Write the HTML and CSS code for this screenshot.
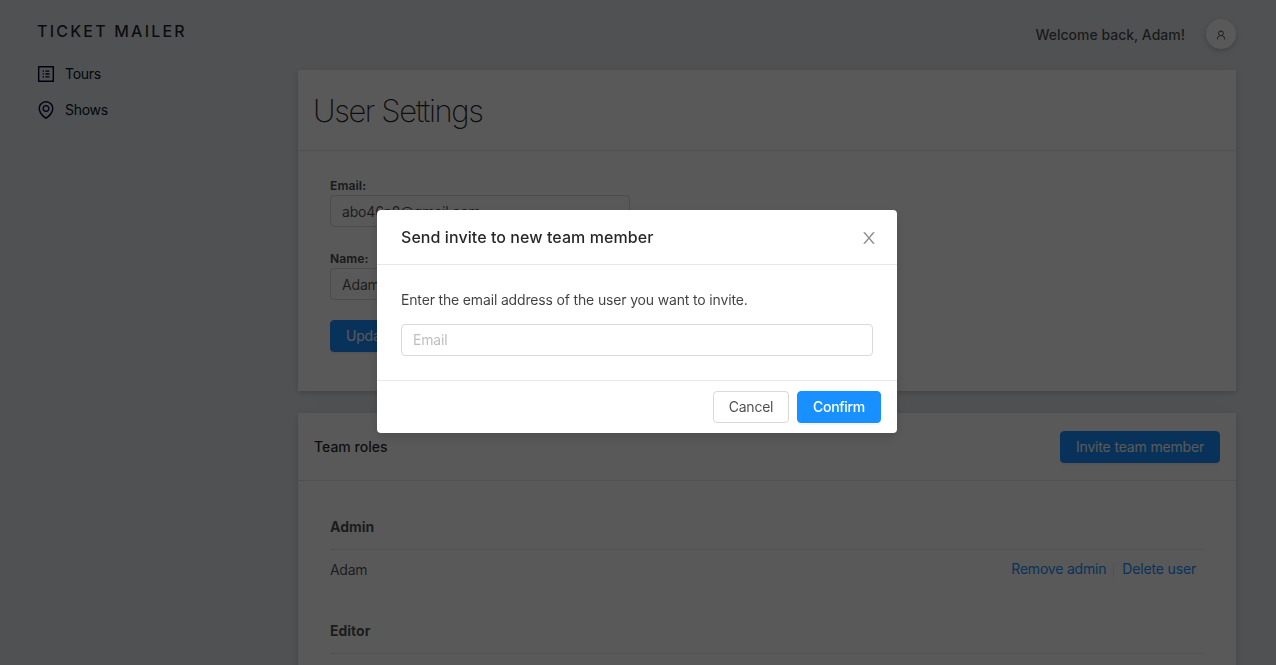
FILE: index.html
```html
<!DOCTYPE html>
<html lang="en">
<head>
<meta charset="utf-8">
<title>Ticket Mailer</title>
<link rel="stylesheet" href="styles.css">
</head>
<body>
<div class="app">
  <aside class="sidebar">
    <div class="brand">TICKET MAILER</div>
    <nav class="nav">
      <a class="nav-item"><svg class="nav-icon" viewBox="64 64 896 896"><path d="M880 112H144c-17.7 0-32 14.3-32 32v736c0 17.7 14.3 32 32 32h736c17.7 0 32-14.3 32-32V144c0-17.7-14.3-32-32-32zm-40 728H184V184h656v656zM492 400h184c4.4 0 8-3.6 8-8v-48c0-4.4-3.6-8-8-8H492c-4.4 0-8 3.6-8 8v48c0 4.4 3.6 8 8 8zm0 144h184c4.4 0 8-3.6 8-8v-48c0-4.4-3.6-8-8-8H492c-4.4 0-8 3.6-8 8v48c0 4.4 3.6 8 8 8zm0 144h184c4.4 0 8-3.6 8-8v-48c0-4.4-3.6-8-8-8H492c-4.4 0-8 3.6-8 8v48c0 4.4 3.6 8 8 8zM340 368a40 40 0 1 0 80 0 40 40 0 1 0-80 0zm0 144a40 40 0 1 0 80 0 40 40 0 1 0-80 0zm0 144a40 40 0 1 0 80 0 40 40 0 1 0-80 0z"/></svg><span>Tours</span></a>
      <a class="nav-item"><svg class="nav-icon" viewBox="64 64 896 896"><path d="M854.6 289.1a362.49 362.49 0 0 0-79.9-115.7 370.83 370.83 0 0 0-118.2-77.8C610.7 76.6 562.1 67 512 67c-50.1 0-98.7 9.6-144.5 28.5-44.3 18.3-84 44.5-118.2 77.8A363.6 363.6 0 0 0 169.4 289c-19.5 45-29.4 92.8-29.4 142 0 70.6 16.9 140.9 50.1 208.7 26.7 54.5 64 107.6 111 158.1 80.3 86.2 164.5 138.9 188.4 153a43.9 43.9 0 0 0 22.4 6.1c7.8 0 15.5-2 22.4-6.1 23.9-14.1 108.1-66.8 188.4-153 47-50.4 84.3-103.6 111-158.1C867.1 572 884 501.8 884 431.1c0-49.2-9.9-97-29.4-142zM512 880.2c-65.9-41.9-300-207.8-300-449.1 0-77.9 31.1-151.1 87.6-206.3C356.3 169.5 431.7 139 512 139s155.7 30.5 212.4 85.9C780.9 280 812 353.2 812 431.1c0 241.3-234.1 407.2-300 449.1zm0-617.2c-97.2 0-176 78.8-176 176s78.8 176 176 176 176-78.8 176-176-78.8-176-176-176zm79.2 255.2A111.6 111.6 0 0 1 512 551c-29.9 0-58-11.7-79.2-32.8A111.6 111.6 0 0 1 400 439c0-29.9 11.7-58 32.8-79.2A111.6 111.6 0 0 1 512 327c29.9 0 58 11.7 79.2 32.8A111.6 111.6 0 0 1 624 439c0 29.9-11.7 58-32.8 79.2z"/></svg><span>Shows</span></a>
    </nav>
  </aside>
  <main class="main">
    <header class="topbar">
      <span class="welcome">Welcome back, Adam!</span>
      <span class="avatar"><svg class="avatar-icon" viewBox="64 64 896 896"><path d="M858.5 763.6a374 374 0 0 0-80.6-119.5 375.63 375.63 0 0 0-119.5-80.6c-.4-.2-.8-.3-1.2-.5C719.5 518 760 444.7 760 362c0-137-111-248-248-248S264 225 264 362c0 82.7 40.5 156 102.8 201.1-.4.2-.8.3-1.2.5-44.8 18.9-85 46-119.5 80.6a375.63 375.63 0 0 0-80.6 119.5A371.7 371.7 0 0 0 136 901.8a8 8 0 0 0 8 8.2h60c4.4 0 7.9-3.5 8-7.8 2-77.2 33-149.5 87.8-204.3 56.7-56.7 132-87.9 212.2-87.9s155.5 31.2 212.2 87.9C779 752.7 810 825 812 902.2c.1 4.4 3.6 7.8 8 7.8h60a8 8 0 0 0 8-8.2c-1-47.8-10.9-94.3-29.5-138.2zM512 534c-45.9 0-89.1-17.9-121.6-50.4S340 407.9 340 362c0-45.9 17.9-89.1 50.4-121.6S466.1 190 512 190s89.1 17.9 121.6 50.4S684 316.1 684 362c0 45.9-17.9 89.1-50.4 121.6S557.9 534 512 534z"/></svg></span>
    </header>
    <section class="card">
      <div class="card-head card-head-large"><h1 class="page-title">User Settings</h1></div>
      <form class="settings">
        <label class="label">Email:</label>
        <div class="field">abo46n8@gmail.com</div>
        <label class="label">Name:</label>
        <div class="field">Adam</div>
        <span class="btn btn-primary btn-update">Update</span>
      </form>
    </section>
    <section class="card card-team">
      <div class="card-head"><h2 class="card-title">Team roles</h2><span class="btn btn-primary btn-invite">Invite team member</span></div>
      <div class="roles">
        <h3 class="role">Admin</h3>
        <div class="member">
          <span class="member-name">Adam</span>
          <span class="actions"><a class="link link-remove">Remove admin</a><i class="sep"></i><a class="link">Delete user</a></span>
        </div>
        <h3 class="role">Editor</h3>
      </div>
    </section>
  </main>
</div>
<div class="mask">
  <div class="modal">
    <div class="modal-head">
      <span class="modal-title">Send invite to new team member</span>
      <svg class="close" viewBox="64 64 896 896"><path d="M563.8 512l262.5-312.9c4.4-5.2.7-13.1-6.1-13.1h-79.8c-4.7 0-9.2 2.1-12.3 5.7L511.6 449.8 295.1 191.7c-3-3.6-7.5-5.7-12.3-5.7H203c-6.8 0-10.5 7.9-6.1 13.1L459.4 512 196.9 824.9A7.95 7.95 0 0 0 203 838h79.8c4.7 0 9.2-2.1 12.3-5.7l216.5-258.1 216.5 258.1c3 3.6 7.5 5.7 12.3 5.7h79.8c6.8 0 10.5-7.9 6.1-13.1L563.8 512z"/></svg>
    </div>
    <div class="modal-body">
      <p class="prompt">Enter the email address of the user you want to invite.</p>
      <div class="field field-wide placeholder">Email</div>
    </div>
    <div class="modal-foot">
      <span class="btn btn-cancel">Cancel</span>
      <span class="btn btn-primary btn-confirm">Confirm</span>
    </div>
  </div>
</div>
</body>
</html>
```
FILE: styles.css
```css
* { box-sizing: border-box; }
html, body { margin: 0; height: 100%; overflow: hidden; }
body { font: 14px/21px Inter, "Liberation Sans", sans-serif; color: rgba(0,0,0,.7); background: #e5e9ed; letter-spacing: -0.16px; }
h1, h2, h3, p { margin: 0; }
svg { display: block; fill: currentColor; flex: none; }

.app { display: flex; height: 665px; overflow: hidden; }
.sidebar { width: 298px; padding: 19px 0 0 37px; color: #001529; flex: none; }
.brand { font-size: 16px; line-height: 24px; font-weight: 500; letter-spacing: 2.2px; color: rgba(0,0,0,.85); }
.nav { display: flex; flex-direction: column; gap: 12px; margin-top: 19px; }
.nav-item { display: flex; align-items: center; gap: 10px; height: 24px; letter-spacing: -0.3px; }
.nav-item span { padding-bottom: 2px; }
.nav-icon { width: 18px; height: 18px; color: #000033; }

.main { width: 938px; }
.topbar { display: flex; justify-content: flex-end; align-items: center; height: 68px; margin-bottom: 2px; gap: 21px; }
.welcome { padding-top: 1px; font-weight: 500; letter-spacing: 0; }
.avatar { display: flex; align-items: center; justify-content: center; width: 30px; height: 30px; border-radius: 50%; background: #fff; box-shadow: 0 2px 6px rgba(0,0,0,.2); }
.avatar-icon { width: 10px; height: 10px; margin-top: 2px; }

.card { height: 321px; background: #fff; box-shadow: 0 2px 5px rgba(0,0,0,.15), 0 0 22px rgba(0,0,0,.04); }
.card-team { margin-top: 22px; height: 300px; }
.card-head { display: flex; align-items: center; justify-content: space-between; height: 68px; padding: 0 16px; border-bottom: 1px solid #e8e8e8; }
.card-head-large { height: 81px; padding-left: 15px; }
.page-title { padding-top: 2px; font-size: 31px; line-height: 48px; font-weight: 200; letter-spacing: -1.4px; color: rgba(0,0,0,.85); }
.card-title { font-size: 14px; font-weight: 500; letter-spacing: 0; color: rgba(0,0,0,.85); }

.settings { padding: 25px 32px 0; }
.label { display: block; font-size: 12px; line-height: 19px; font-weight: 700; letter-spacing: 0.1px; }
.field { width: 300px; height: 32px; padding: 5px 11px; line-height: 21px; border: 1px solid #d9d9d9; border-radius: 4px; background: #fff; }
.settings .field { margin-bottom: 22px; }
.btn { display: inline-flex; align-items: center; justify-content: center; height: 32px; padding-bottom: 2px; border: 1px solid #d9d9d9; border-radius: 4px; white-space: nowrap; }
.btn-primary { color: #fff; border-color: #1890ff; background: #1890ff; box-shadow: 0 2px 0 rgba(0,0,0,.045); }
.settings .btn-update { margin-top: -2px; width: 79px; }
.btn-invite { width: 160px; padding-bottom: 0; }

.roles { padding: 32px 32px 0; }
.role { height: 37px; padding-top: 3px; font-size: 14px; line-height: 21px; font-weight: 700; letter-spacing: 0; border-bottom: 1px solid #e8e8e8; }
.member { display: flex; justify-content: space-between; padding: 8px 8px 0 0; height: 67px; }
.member-name { padding-top: 1px; letter-spacing: -0.3px; }
.actions { display: flex; align-items: flex-start; }
.link { color: #1890ff; }
.link-remove { letter-spacing: -0.2px; }
.sep { width: 1px; height: 14px; margin: 5px 8px 0 7px; background: #e8e8e8; }

.mask { position: fixed; inset: 0; padding: 210px 0 0 377px; background: rgba(0,0,0,.65); }
.modal { width: 520px; height: 223px; background: #fff; border-radius: 4px; box-shadow: 0 4px 12px rgba(0,0,0,.15); }
.modal-head { display: flex; align-items: center; justify-content: space-between; height: 55px; padding: 0 20px 0 24px; border-bottom: 1px solid #e8e8e8; }
.modal-title { font-size: 16px; font-weight: 500; letter-spacing: 0.07px; color: rgba(0,0,0,.85); }
.close { width: 16px; height: 16px; margin-top: 2px; color: rgba(0,0,0,.45); }
.modal-body { height: 115px; padding: 24px 24px 0; }
.prompt { margin-bottom: 14px; color: rgba(0,0,0,.75); }
.field-wide { width: 472px; }
.field-wide.placeholder { padding-top: 4px; color: #bfbfbf; }
.modal-foot { display: flex; justify-content: flex-end; gap: 8px; padding: 10px 16px; height: 53px; border-top: 1px solid #e8e8e8; }
.btn-cancel { width: 76px; letter-spacing: -0.25px; }
.btn-confirm { width: 84px; font-weight: 500; letter-spacing: -0.3px; }
```
